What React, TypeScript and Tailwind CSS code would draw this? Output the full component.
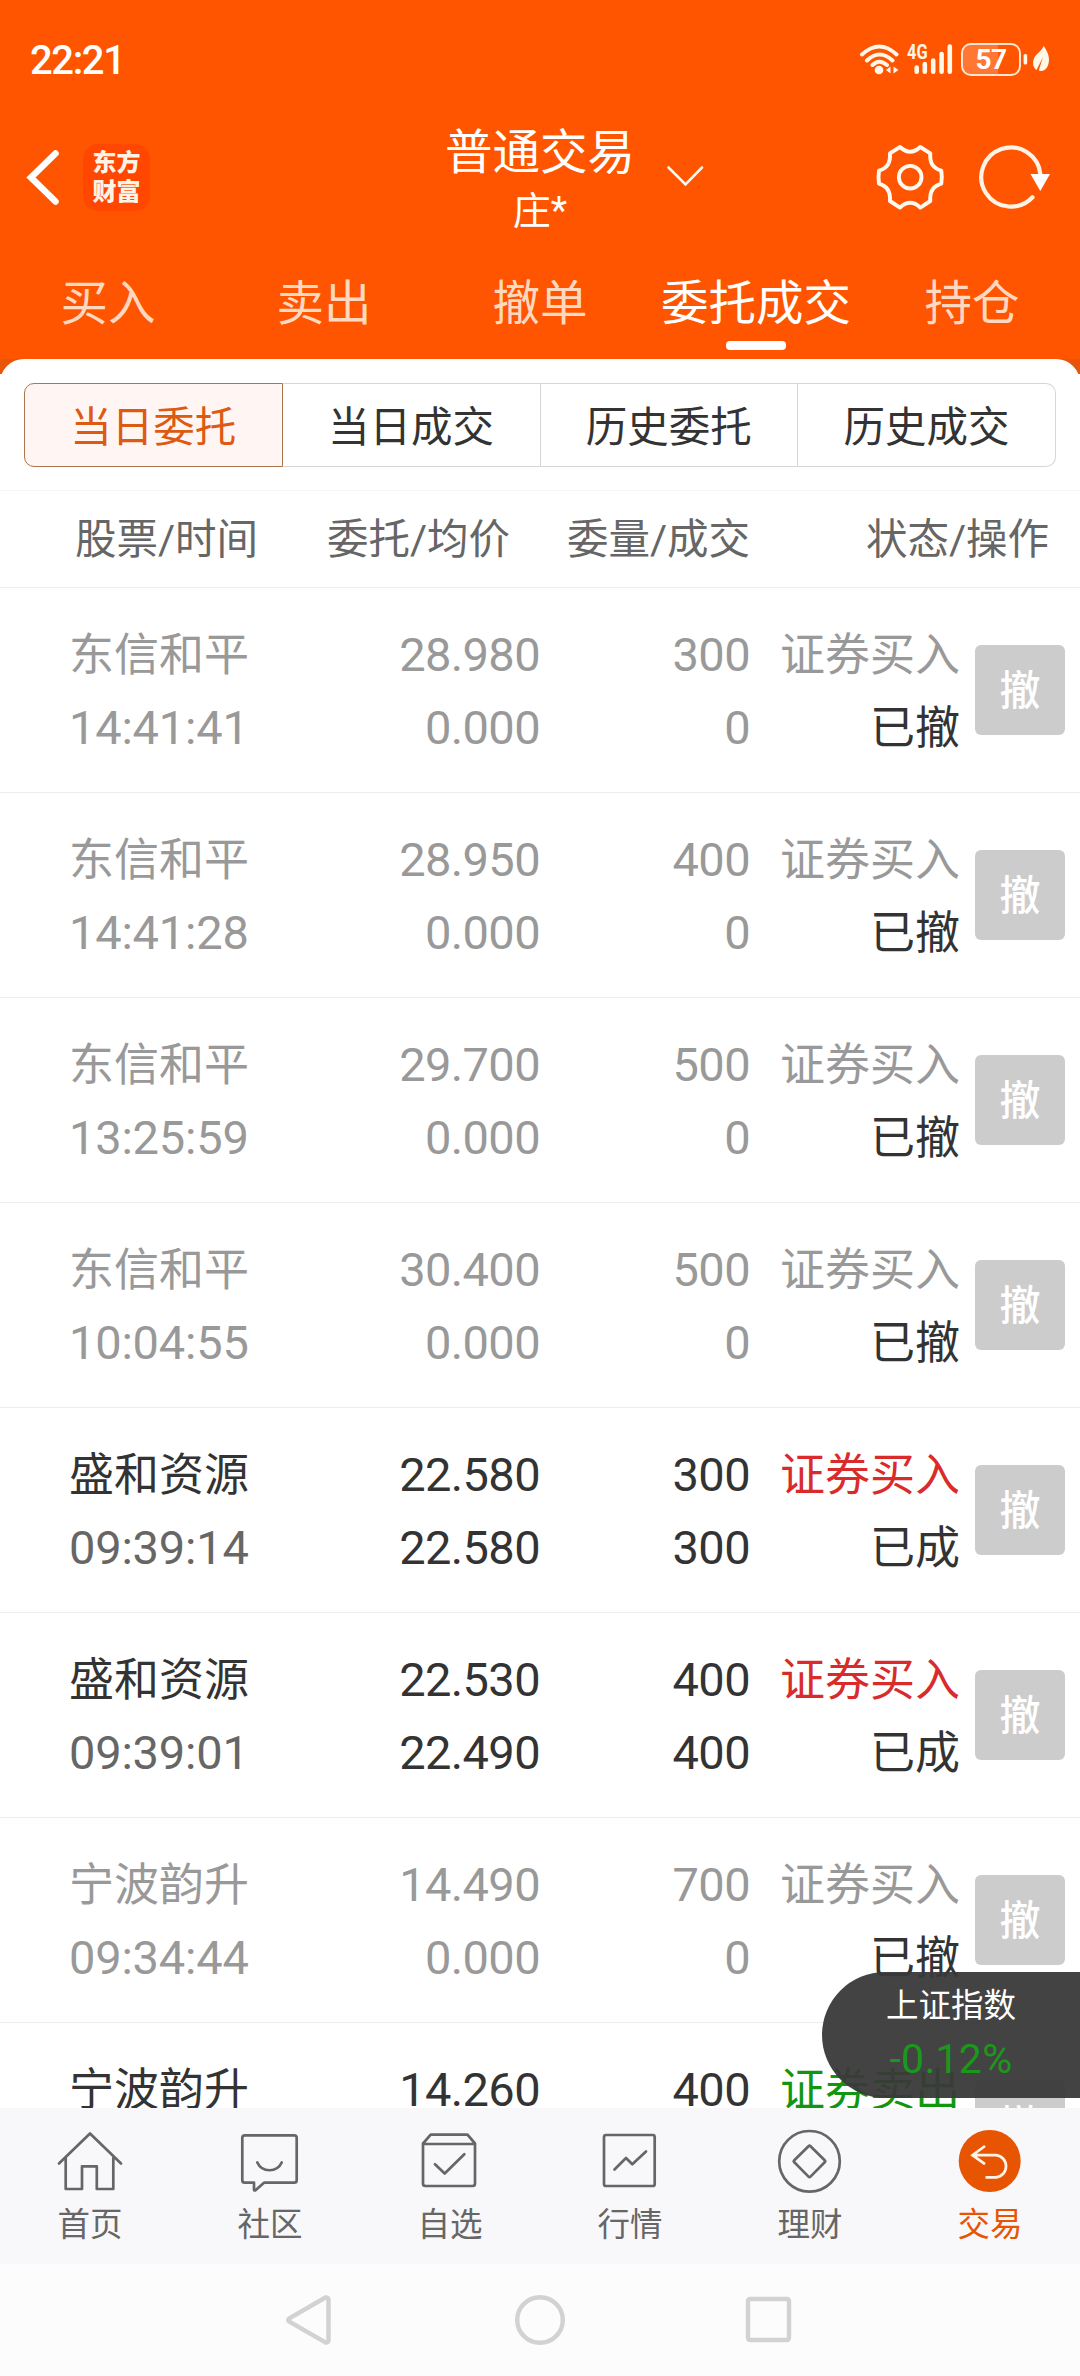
import { clsx } from "clsx";
import type { ReactNode } from "react";

type OrderState = "cancelled" | "filled";

interface Order {
  name: string;
  time?: string;
  price: string;
  avgPrice?: string;
  amount: number;
  filled?: number;
  side: "buy" | "sell";
  state: OrderState;
}

const TRADE_TABS = ["买入", "卖出", "撤单", "委托成交", "持仓"];
const ORDER_TABS = ["当日委托", "当日成交", "历史委托", "历史成交"];

const STATE_LABEL: Record<OrderState, string> = { cancelled: "已撤", filled: "已成" };

const ORDERS: Order[] = [
  { name: "东信和平", time: "14:41:41", price: "28.980", avgPrice: "0.000", amount: 300, filled: 0, side: "buy", state: "cancelled" },
  { name: "东信和平", time: "14:41:28", price: "28.950", avgPrice: "0.000", amount: 400, filled: 0, side: "buy", state: "cancelled" },
  { name: "东信和平", time: "13:25:59", price: "29.700", avgPrice: "0.000", amount: 500, filled: 0, side: "buy", state: "cancelled" },
  { name: "东信和平", time: "10:04:55", price: "30.400", avgPrice: "0.000", amount: 500, filled: 0, side: "buy", state: "cancelled" },
  { name: "盛和资源", time: "09:39:14", price: "22.580", avgPrice: "22.580", amount: 300, filled: 300, side: "buy", state: "filled" },
  { name: "盛和资源", time: "09:39:01", price: "22.530", avgPrice: "22.490", amount: 400, filled: 400, side: "buy", state: "filled" },
  { name: "宁波韵升", time: "09:34:44", price: "14.490", avgPrice: "0.000", amount: 700, filled: 0, side: "buy", state: "cancelled" },
  { name: "宁波韵升", price: "14.260", amount: 400, side: "sell", state: "filled" },
];

const StatusBar = () => (
  <div className="flex h-[104px] items-start justify-between pt-[42px] pr-[30px] pl-[30px]">
    <span className="text-[40px] leading-[37px] font-medium tracking-[-1.400px]">22:21</span>
    <div className="flex items-start">
      {/* wifi */}
      <svg className="h-[36px] w-[46px]" viewBox="858 42 46 36" fill="none" stroke="#fff7e8" strokeWidth="4" strokeLinecap="round">
        <path d="M862 54.500Q879.500 38.500 896.500 54.500M867 60.500Q879.500 48.500 892.500 60.500M872.500 65Q879 58.500 887 65" />
        <circle cx="879" cy="70" r="4.300" fill="#fff7e8" stroke="none" />
        <path d="M890.500 66.500V73.500L886 70ZM893.500 66.500V73.500L898.500 70Z" fill="#fff7e8" stroke="none" />
      </svg>
      {/* signal */}
      <div className="relative">
        <span className="absolute top-[2px] left-[3px] origin-left scale-x-[0.82] text-[20px] leading-[17px] font-bold text-[#fff7e8]">4G</span>
        <svg className="h-[36px] w-[57px]" viewBox="904 42 57 36" stroke="#fff7e8" strokeWidth="4.600" strokeLinecap="round">
          <path d="M916.700 67.500V71.700M924.800 64V71.700M933.200 60.500V71.700M941.600 54V71.700M949.800 46.500V71.700" />
        </svg>
      </div>
      <div className="relative mt-[1px] h-[33px] w-[60px] overflow-hidden rounded-[10px] border-2 border-[#ffe6d0]">
        <div className="h-full w-[35px] bg-white/20" />
        <span className="absolute inset-0 text-center text-[28px] leading-[30px] font-bold tracking-[-0.500px]">57</span>
      </div>
      <svg className="h-[36px] w-[29px]" viewBox="1021 42 29 36" fill="#fff7e8">
        <rect x="1023.600" y="54" width="3.600" height="10.500" rx="1.600" />
        <path d="M1043.800 45.700C1046 50 1049.200 54 1049 60C1048.700 67 1045 71.500 1040.500 71L1038.800 70.600L1043 57L1036.500 70C1033 67.500 1032.200 63 1034 58.500C1036 53.500 1041.500 51.500 1043.800 45.700Z" />
      </svg>
    </div>
  </div>
);

const TitleBar = () => (
  <div className="grid h-[146px] grid-cols-[1fr_auto_1fr]">
    <div className="flex items-start pt-[40px] pl-[26px]">
      <svg className="mt-[4px] h-[60px] w-[36px]" viewBox="26 148 36 60" fill="none" stroke="white" strokeWidth="6.500" strokeLinecap="round">
        <path d="M55.500 153.500L31 177.500L55.500 201.500" />
      </svg>
      <div className="ml-[21px] flex h-[67px] w-[67px] flex-col items-center justify-center rounded-[15px] bg-[#ff4700] text-[24px] leading-[29px] font-black text-[#fff3e6]">
        <span>东方</span>
        <span>财富</span>
      </div>
    </div>
    <div className="flex flex-col items-center pt-[20px]">
      <span className="text-[47.500px] leading-[58px]">普通交易</span>
      <span className="text-[38px] leading-[59px]">庄*</span>
    </div>
    <div className="flex items-start">
      <svg className="mt-[58px] ml-[28px] h-[28px] w-[44px]" viewBox="662 162 44 28" fill="none" stroke="#fff7e8" strokeWidth="2.600" strokeLinecap="round">
        <path d="M667.500 167.500L684.500 184.500L701 167.500" />
      </svg>
      <svg className="mt-[36.700px] mr-[30px] ml-auto h-[72px] w-[72px]" viewBox="0 0 72 72" fill="none" stroke="#fff9f0" strokeWidth="3.900" strokeLinejoin="round">
        <path d="M26 6Q36.200 15.500 46.300 6L56.300 12.300C55.500 21 59 27.500 67.300 29.600Q68.300 36 67.300 42.600C59 45 55.500 51.500 56.300 60L46.300 66.600Q36.200 57 26 66.600L15.900 60C16.700 51.500 13.200 45 5 42.600Q4 36 5 29.600C13.200 27.500 16.700 21 15.900 12.300Z" />
        <circle cx="36.200" cy="36.200" r="11.300" />
      </svg>
      <svg className="mt-[36px] mr-[28px] h-[72px] w-[76px]" viewBox="976 140 76 72" fill="none" stroke="#fff3e6" strokeWidth="4.200" strokeLinecap="round">
        <path d="M1032.500 197.300A29.600 29.600 0 1 1 1040.400 174.500" />
        <path d="M1030.500 174H1050L1040.300 191Z" fill="white" stroke="none" />
      </svg>
    </div>
  </div>
);

const TradeTabs = () => (
  <nav className="grid h-[109px] grid-cols-5">
    {TRADE_TABS.map((tab) => {
      const active = tab === "委托成交";
      return (
        <div key={tab} className="flex flex-col items-center pt-[20px]">
          <span className={clsx("text-[47.500px] leading-[68px]", active ? "text-white" : "text-[#ffd8c0]")}>{tab}</span>
          {active && <span className="mt-[3px] h-[9px] w-[60px] rounded-[4px] bg-white" />}
        </div>
      );
    })}
  </nav>
);

const OrderTabs = () => (
  <div className="flex h-[117px] shrink-0 border-b border-[#f5f5f5] px-[24px] pt-[9px]">
    {ORDER_TABS.map((tab, idx) => (
      <button
        key={tab}
        type="button"
        className={clsx(
          "h-[84px] flex-1 border pt-[5px] text-[41.500px] leading-[76px]",
          idx === 0 && "rounded-l-[10px] border-[#ad7550] bg-[#fff6f3] text-[#dc5a12]",
          idx > 0 && "border-l-0 border-[#d6d6d6] text-[#333]",
          idx === ORDER_TABS.length - 1 && "rounded-r-[10px]",
        )}
      >
        {tab}
      </button>
    ))}
  </div>
);

const ListHeader = () => (
  <div className="flex h-[97px] shrink-0 border-b border-[#ececec] pt-[2px] pl-[75px] text-[41.500px] leading-[94px] text-[#666]">
    <span className="w-[252px]">股票/时间</span>
    <span className="w-[240px]">委托/均价</span>
    <span className="w-[299px]">委量/成交</span>
    <span>状态/操作</span>
  </div>
);

const OrderRow = ({ order }: { order: Order }) => {
  const cancelled = order.state === "cancelled";
  const settled = order.filled !== undefined;
  return (
    <li
      className={clsx(
        "flex h-[205px] shrink-0 border-b border-[#ececec] pt-[30px] pl-[69px] text-[47px] leading-[73px] tracking-[-0.600px]",
        cancelled ? "text-[#999]" : "text-[#333]",
      )}
    >
      <div className="w-[250px]">
        <p className="h-[73px] text-[45px] leading-[75px] tracking-normal">{order.name}</p>
        <p className={clsx("tracking-[-0.200px]", !cancelled && "text-[#666]")}>{order.time}</p>
      </div>
      <div className="w-[221px] text-right">
        <p>{order.price}</p>
        <p>{order.avgPrice}</p>
      </div>
      <div className="w-[210px] text-right">
        <p>{order.amount}</p>
        <p>{order.filled}</p>
      </div>
      <div className="w-[210px] text-right text-[45px] leading-[75px] tracking-normal">
        <p className={clsx("h-[73px]", !cancelled && (order.side === "buy" ? "text-[#d92b2b]" : "text-[#129612]"))}>
          {order.side === "buy" ? "证券买入" : "证券卖出"}
        </p>
        {settled && <p className="h-[73px] text-[#333]">{STATE_LABEL[order.state]}</p>}
      </div>
      <button
        type="button"
        className="mt-[27px] ml-[15px] h-[90px] w-[90px] rounded-[6px] bg-[#ccc] pt-[2px] text-center text-[41px] leading-[86px] font-medium tracking-normal text-white"
      >
        撤
      </button>
    </li>
  );
};

const IndexBadge = () => (
  <div className="absolute right-0 bottom-[10px] flex h-[126px] w-[258px] flex-col items-center rounded-l-full bg-[#393939]/95 pr-[3px] pl-[3px]">
    <span className="pt-[5px] text-[32.500px] leading-[58px] text-white">上证指数</span>
    <span className="text-[41px] leading-[48px] tracking-[0.300px] text-[#1b981b]">-0.12%</span>
  </div>
);

const TabIcon = ({ children }: { children: ReactNode }) => (
  <svg className="h-[66px] w-[66px]" viewBox="0 0 66 66" fill="none" stroke="currentColor" strokeWidth="2.700" strokeLinejoin="round" strokeLinecap="round">
    {children}
  </svg>
);

const BOTTOM_TABS: { label: string; icon: ReactNode }[] = [
  {
    label: "首页",
    icon: <path d="M2 35.500L33 5.500L64 35.500M8.700 30V61H25V38.300H39.800V61H56.300V30" />,
  },
  {
    label: "社区",
    icon: (
      <path d="M7.800 7.300H57.200Q59.700 7.300 59.700 9.800V52.200Q59.700 54.700 57.200 54.700H27L18.500 62.200Q17 63 17 61.500V54.700H7.800Q5.300 54.700 5.300 52.200V9.800Q5.300 7.300 7.800 7.300ZM20.300 34.500C25 44.800 40 44.800 44.700 34.500" />
    ),
  },
  {
    label: "自选",
    icon: <path d="M6 15.500L13.700 6.700H50.500L58 15.500V55.500Q58 58 55.500 58H8.500Q6 58 6 55.500ZM6 16H58M18 36.200L27.700 45.500L47.300 26.300" />,
  },
  {
    label: "行情",
    icon: (
      <>
        <rect x="7" y="7" width="50.700" height="51" rx="2" />
        <path d="M17.500 41.500L29 30L35.300 36.300L49 23.500" />
      </>
    ),
  },
  {
    label: "理财",
    icon: (
      <>
        <circle cx="32.500" cy="33.300" r="30.300" />
        <path d="M31.500 18.200Q32.500 17.200 33.500 18.200L47.700 32.300Q48.700 33.300 47.700 34.300L33.500 48.600Q32.500 49.600 31.500 48.600L17.300 34.300Q16.300 33.300 17.300 32.300Z" />
      </>
    ),
  },
  {
    label: "交易",
    icon: (
      <>
        <circle cx="32.700" cy="33" r="31" fill="currentColor" stroke="none" />
        <path d="M28 18L15.500 27.200L28 36.200M16 27.200H39A11.100 11.100 0 0 1 39 49.300H28.500" stroke="#fff3e6" strokeLinecap="butt" strokeLinejoin="miter" />
      </>
    ),
  },
];

const BottomTabs = () => (
  <nav className="grid h-[156px] grid-cols-6 bg-[#f8f8fa]">
    {BOTTOM_TABS.map(({ label, icon }) => (
      <div key={label} className={clsx("flex flex-col items-center pt-[20px]", label === "交易" ? "text-[#e85502]" : "text-[#666]")}>
        <TabIcon>{icon}</TabIcon>
        <span className="mt-[7px] text-[32.500px] leading-[48px]">{label}</span>
      </div>
    ))}
  </nav>
);

const SystemNav = () => (
  <div className="flex h-[112px] items-center justify-between bg-[#fcfcfc] px-[285px]">
    {[
      <path key="back" d="M40.500 3.500L4 24.500Q2.500 26 4 27.500L40.500 48.500Q43.500 49 43.500 46V6Q43.500 3 40.500 3.500Z" />,
      <circle key="home" cx="26" cy="26" r="22.800" />,
      <rect key="recent" x="5" y="5" width="41" height="41" rx="2" />,
    ].map((shape) => (
      <svg key={shape.key} className="h-[52px] w-[52px]" viewBox="0 0 52 52" fill="none" stroke="#d2d2d2" strokeWidth="4.400">
        {shape}
      </svg>
    ))}
  </div>
);

export default function App() {
  return (
    <div className="flex h-[2376px] w-[1080px] flex-col overflow-hidden bg-white font-['Roboto','Noto_Sans_CJK_SC',sans-serif]">
      <header className="h-[359px] shrink-0 bg-[#ff5500] text-white">
        <StatusBar />
        <TitleBar />
        <TradeTabs />
      </header>
      <main className="relative flex min-h-0 flex-1 flex-col overflow-hidden">
        <div className="h-[15px] shrink-0 overflow-hidden bg-[#e65508]">
          <div className="h-[60px] rounded-t-[24px] bg-white" />
        </div>
        <OrderTabs />
        <ListHeader />
        <ul className="flex flex-col">
          {ORDERS.map((order, idx) => (
            <OrderRow key={idx} order={order} />
          ))}
        </ul>
        <IndexBadge />
      </main>
      <BottomTabs />
      <SystemNav />
    </div>
  );
}
